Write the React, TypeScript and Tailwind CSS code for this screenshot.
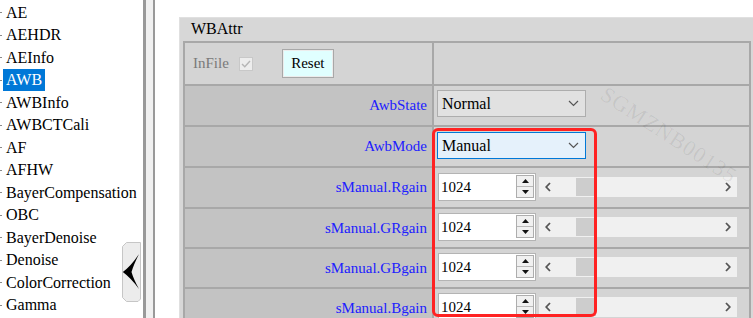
import React from "react";

const items = [
  "AE",
  "AEHDR",
  "AEInfo",
  "AWB",
  "AWBInfo",
  "AWBCTCali",
  "AF",
  "AFHW",
  "BayerCompensation",
  "OBC",
  "BayerDenoise",
  "Denoise",
  "ColorCorrection",
  "Gamma",
];

function CollapseButton() {
  return (
    <svg width="20" height="61" viewBox="0 0 20 61" className="block">
      <path
        d="M4.5 0.5 H18.5 V57 L16 59.5 H4.5 L0.5 55.5 V4.5 Z"
        fill="#ececec"
        stroke="#c6c6c6"
        strokeWidth="1"
      />
      <path d="M17 12 Q9 24 0.8 30 Q9 36 17 47 Q11.5 37 9.5 30 Q11.5 23 17 12 Z" fill="#000" />
    </svg>
  );
}

function SelectChevron() {
  return (
    <svg width="11" height="7" viewBox="0 0 11 7">
      <path d="M1 1 L5.5 5.5 L10 1" stroke="#555" strokeWidth="1.2" fill="none" />
    </svg>
  );
}

function Select({ value, active }: { value: string; active?: boolean }) {
  return (
    <div
      className={
        active
          ? "flex items-center w-[149px] h-[27px] border border-[#0078d7] bg-[#e5f1fb] pl-[4px] pr-[6px]"
          : "flex items-center w-[149px] h-[27px] border border-[#adadad] bg-[#e1e1e1] pl-[4px] pr-[6px]"
      }
    >
      <span className="flex-1 text-[16px] leading-[20px]">{value}</span>
      <SelectChevron />
    </div>
  );
}

function Spin() {
  return (
    <div className="flex flex-col w-[18px] h-[23px] mt-[1px] mr-[1px] border border-[#adadad] bg-[#f0f0f0]">
      <div className="flex-1 flex items-center justify-center border-b border-[#b8b8b8]">
        <svg width="7" height="4" viewBox="0 0 7 4">
          <path d="M0 4 L3.5 0 L7 4 Z" fill="#111" />
        </svg>
      </div>
      <div className="flex-1 flex items-center justify-center">
        <svg width="7" height="4" viewBox="0 0 7 4">
          <path d="M0 0 L3.5 4 L7 0 Z" fill="#111" />
        </svg>
      </div>
    </div>
  );
}

function ScrollBar() {
  return (
    <div className="flex items-center w-[198px] h-[20px] bg-[#f0f0f0]">
      <div className="w-[17px] flex justify-center">
        <svg width="6" height="10" viewBox="0 0 6 10">
          <path d="M5 1 L1.2 5 L5 9" stroke="#555" strokeWidth="1.8" fill="none" />
        </svg>
      </div>
      <div className="flex-1 h-full flex items-center">
        <div className="ml-[20px] w-[20px] h-[18px] bg-[#cdcdcd]" />
      </div>
      <div className="w-[17px] flex justify-center mr-[1px]">
        <svg width="6" height="10" viewBox="0 0 6 10">
          <path d="M1 1 L4.8 5 L1 9" stroke="#555" strokeWidth="1.8" fill="none" />
        </svg>
      </div>
    </div>
  );
}

function NumberField() {
  return (
    <div className="flex items-start w-[98px] h-[28px] border border-[#b4b4b4] bg-white">
      <span className="flex-1 pl-[2px] text-[15px] leading-[26px]">1024</span>
      <Spin />
    </div>
  );
}

function Label({ text }: { text: string }) {
  return (
    <div className="w-[249px] shrink-0 border-r-2 border-[#a8a8a8] bg-[#c3c3c3] flex items-center justify-end pr-[5px] text-[15px] text-[#2020ff] whitespace-nowrap">
      {text}
    </div>
  );
}

const gains: { name: string; h: string; pt: string }[] = [
  { name: "sManual.Rgain", h: "h-[41px]", pt: "pt-[5px]" },
  { name: "sManual.GRgain", h: "h-[40px]", pt: "pt-[4px]" },
  { name: "sManual.GBgain", h: "h-[40px]", pt: "pt-[4px]" },
  { name: "sManual.Bgain", h: "h-[40px]", pt: "pt-[4px]" },
];

export default function App() {
  return (
    <div className="relative flex w-[753px] h-[318px] overflow-hidden bg-white text-black font-['Liberation_Serif','Times_New_Roman',serif]">
      {/* Sidebar tree */}
      <div className="relative w-[143px] shrink-0 pt-[1.5px]">
        {items.map((it) => (
          <div key={it} className="relative flex items-center h-[22.5px]">
            <span className="w-[2px] h-[1px] bg-[#8a8a8a] mr-[1px]" />
            <span
              className={
                it === "AWB"
                  ? "px-[3px] h-[22px] leading-[22px] text-[16px] whitespace-nowrap bg-[#0078d7] text-white"
                  : "px-[3px] h-[22px] leading-[22px] text-[16px] whitespace-nowrap"
              }
            >
              {it}
            </span>
          </div>
        ))}
        <div className="absolute left-[122px] top-[242px]">
          <CollapseButton />
        </div>
      </div>

      {/* Splitter */}
      <div className="w-[12px] shrink-0 border-l-[3px] border-r-[2px] border-[#999999] bg-[#f0f0f0]" />

      {/* Main */}
      <div className="flex-1 pt-[17px] pl-[24px] bg-white">
        <div className="w-[600px] h-[320px] bg-[#d7d7d7] border-l border-t border-[#e0e0e0] pl-[3px]">
          <div className="h-[23px] leading-[21px] pl-[8px] text-[16px]">WBAttr</div>
          <div className="w-[568px] border-2 border-[#a8a8a8]">
            {/* InFile / Reset */}
            <div className="flex h-[41px] bg-[#d4d4d4]">
              <div className="w-[249px] shrink-0 border-r-2 border-[#a8a8a8] flex items-center pl-[8px]">
                <span className="text-[15px] text-[#7a7a7a]">InFile</span>
                <div className="ml-[10px] w-[14px] h-[14px] border border-[#c8c8c8] bg-[#ededed] flex items-center justify-center">
                  <svg width="10" height="8" viewBox="0 0 10 8">
                    <path d="M1 4 L3.8 6.8 L9 1" stroke="#b5b5b5" strokeWidth="1.4" fill="none" />
                  </svg>
                </div>
                <div className="ml-[29px] w-[52px] h-[29px] border border-[#a8a8a8] p-[1px] bg-[#ececec]">
                  <div className="w-full h-full bg-[#e0ffff] flex items-center justify-center text-[15px]">
                    Reset
                  </div>
                </div>
              </div>
              <div className="flex-1" />
            </div>

            {/* AwbState */}
            <div className="flex h-[41px] border-t-2 border-[#a8a8a8]">
              <Label text="AwbState" />
              <div className="flex-1 bg-[#d4d4d4] pl-[3px] pt-[4px]">
                <Select value="Normal" />
              </div>
            </div>

            {/* AwbMode */}
            <div className="flex h-[41px] border-t-2 border-[#a8a8a8]">
              <Label text="AwbMode" />
              <div className="flex-1 bg-[#d4d4d4] pl-[3px] pt-[5px]">
                <Select value="Manual" active />
              </div>
            </div>

            {gains.map((g) => (
              <div key={g.name} className={`flex border-t-2 border-[#a8a8a8] ${g.h}`}>
                <Label text={g.name} />
                <div className={`flex-1 bg-[#d4d4d4] pl-[4px] ${g.pt}`}>
                  <div className="flex items-center gap-[3px] h-[28px]">
                    <NumberField />
                    <ScrollBar />
                  </div>
                </div>
              </div>
            ))}
          </div>
        </div>
      </div>

      {/* watermark */}
      <div className="absolute left-[612px] top-[78px] rotate-[33deg] origin-top-left text-[22px] tracking-[1px] text-black/[0.07] pointer-events-none whitespace-nowrap">
        SGMZNB00135
      </div>

      {/* red annotation */}
      <div className="absolute left-[432px] top-[128px] w-[165px] h-[189px] border-[3px] border-[#ff2222] rounded-[6px] pointer-events-none" />
    </div>
  );
}
